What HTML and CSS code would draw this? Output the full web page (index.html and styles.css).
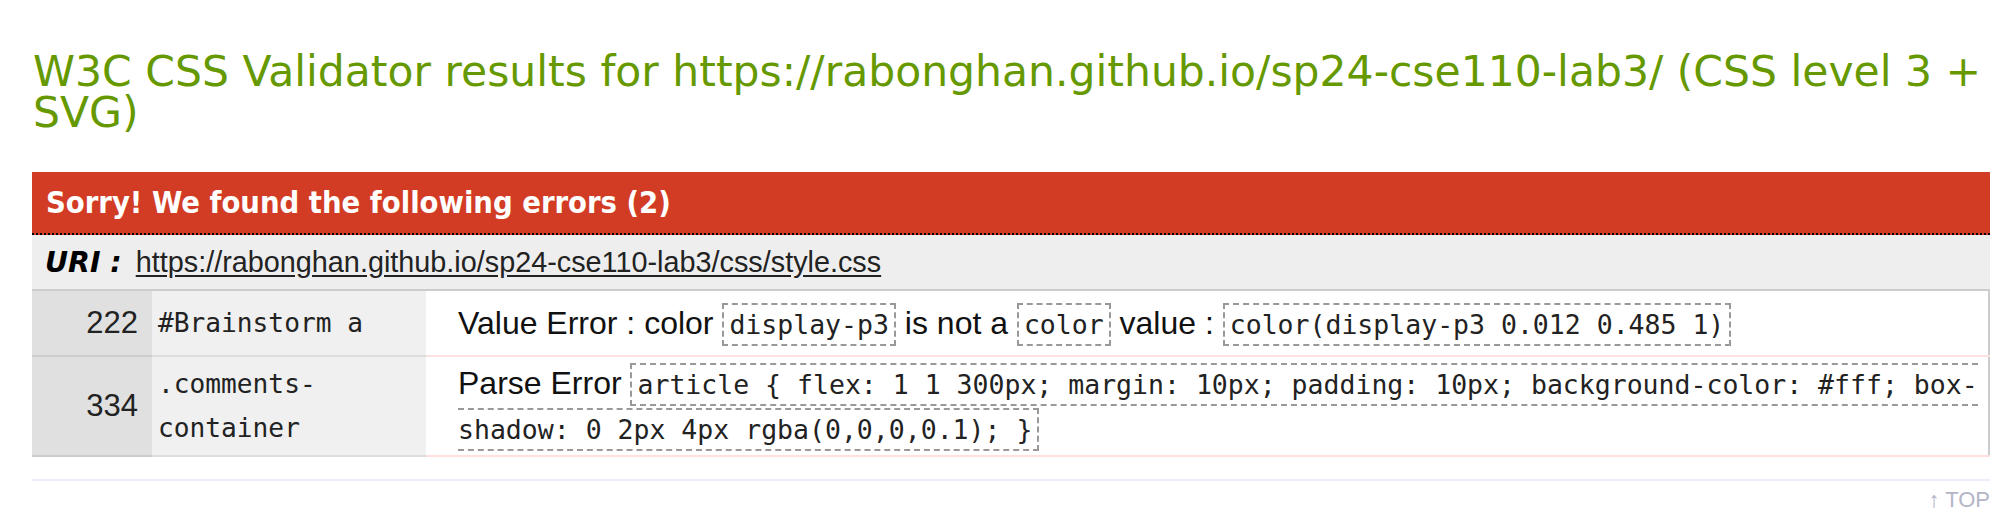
FILE: index.html
```html
<!DOCTYPE html>
<html lang="en">
<head>
<meta charset="utf-8">
<title>W3C CSS Validator results</title>
<link rel="stylesheet" href="styles.css">
</head>
<body>
<div class="page">
  <h2 class="title">W3C CSS Validator results for https://rabonghan.github.io/sp24-cse110-lab3/ (CSS level 3 + SVG)</h2>
  <div class="errors">
    <h3 class="errors-head">Sorry! We found the following errors (2)</h3>
    <div class="uri"><span class="uri-label">URI :</span> <a class="uri-link" href="#">https://rabonghan.github.io/sp24-cse110-lab3/css/style.css</a></div>
    <table class="err-table">
      <tr>
        <td class="linenum">222</td>
        <td class="ctx">#Brainstorm a</td>
        <td class="msg">Value Error : color <code class="tok">display-p3</code> is not a <code class="tok">color</code> value : <code class="tok">color(display-p3 0.012 0.485 1)</code></td>
      </tr>
      <tr>
        <td class="linenum">334</td>
        <td class="ctx">.comments-container</td>
        <td class="msg">Parse Error <code class="tok">article { flex: 1 1 300px; margin: 10px; padding: 10px; background-color: #fff; box-shadow: 0 2px 4px rgba(0,0,0,0.1); }</code></td>
      </tr>
    </table>
  </div>
  <hr class="sep">
  <div class="top"><a class="top-link" href="#">↑ TOP</a></div>
</div>
</body>
</html>
```
FILE: styles.css
```css
html, body {
  margin: 0;
  padding: 0;
  background: #fff;
}

.page {
  padding: 0 18px 0 32px;
  font-family: "Liberation Sans", Arial, sans-serif;
}

.title {
  margin: 0;
  padding: 51px 0 0 1px;
  font-family: "DejaVu Sans", Verdana, sans-serif;
  font-weight: normal;
  font-size: 42.5px;
  line-height: 41px;
  color: #669900;
}

.errors {
  margin-top: 39px;
}

.errors-head {
  margin: 0;
  background: #d33c24;
  color: #fff;
  font-family: "DejaVu Sans", Verdana, sans-serif;
  font-stretch: condensed;
  font-weight: bold;
  font-size: 30.6px;
  line-height: 61px;
  padding: 0 14px;
  border-bottom: 2px dotted #000;
}

.uri {
  background: #eeeeee;
  height: 54px;
  line-height: 54px;
  padding: 0 13px;
  font-size: 28.8px;
  border-bottom: 2px solid #cccccc;
}

.uri-label {
  font-family: "DejaVu Sans", Verdana, sans-serif;
  font-weight: bold;
  font-style: italic;
  font-size: 28.4px;
  color: #000;
  margin-right: 6px;
}

.uri-link {
  color: #222;
  text-decoration: underline;
  text-underline-offset: 3px;
}

.err-table {
  width: 100%;
  border-collapse: collapse;
  border-right: 2px solid #cccccc;
}

.err-table td {
  padding: 0;
}

.linenum {
  width: 120px;
  box-sizing: border-box;
  background: #e0e0e0;
  text-align: right;
  padding: 14px 14px 14px 0 !important;
  font-size: 31px;
  line-height: 36px;
  vertical-align: middle;
  color: #222;
  border-bottom: 2px solid #cccccc;
}

.ctx {
  width: 274px;
  box-sizing: border-box;
  background: #f0f0f0;
  padding: 0 6px !important;
  font-family: "DejaVu Sans Mono", Menlo, monospace;
  font-size: 26.2px;
  line-height: 44px;
  color: #222;
  vertical-align: middle;
  border-bottom: 2px solid #dddddd;
}

.msg {
  background: #fff;
  padding: 4px 0 4px 32px !important;
  font-size: 32px;
  line-height: 45px;
  color: #111;
  vertical-align: middle;
  border-bottom: 2px solid #fde0e0;
}

.tok {
  font-family: "DejaVu Sans Mono", Menlo, monospace;
  font-size: 26.5px;
  line-height: 30px;
  border: 2px dashed #999999;
  padding: 4px 5px;
  color: #222;
}

.sep {
  margin: 22px 0 0;
  border: 0;
  height: 2px;
  background: #ededfa;
}

.top {
  text-align: right;
  padding-top: 6px;
  font-size: 22px;
}

.top-link {
  color: #b5b5c8;
  text-decoration: none;
}
```
